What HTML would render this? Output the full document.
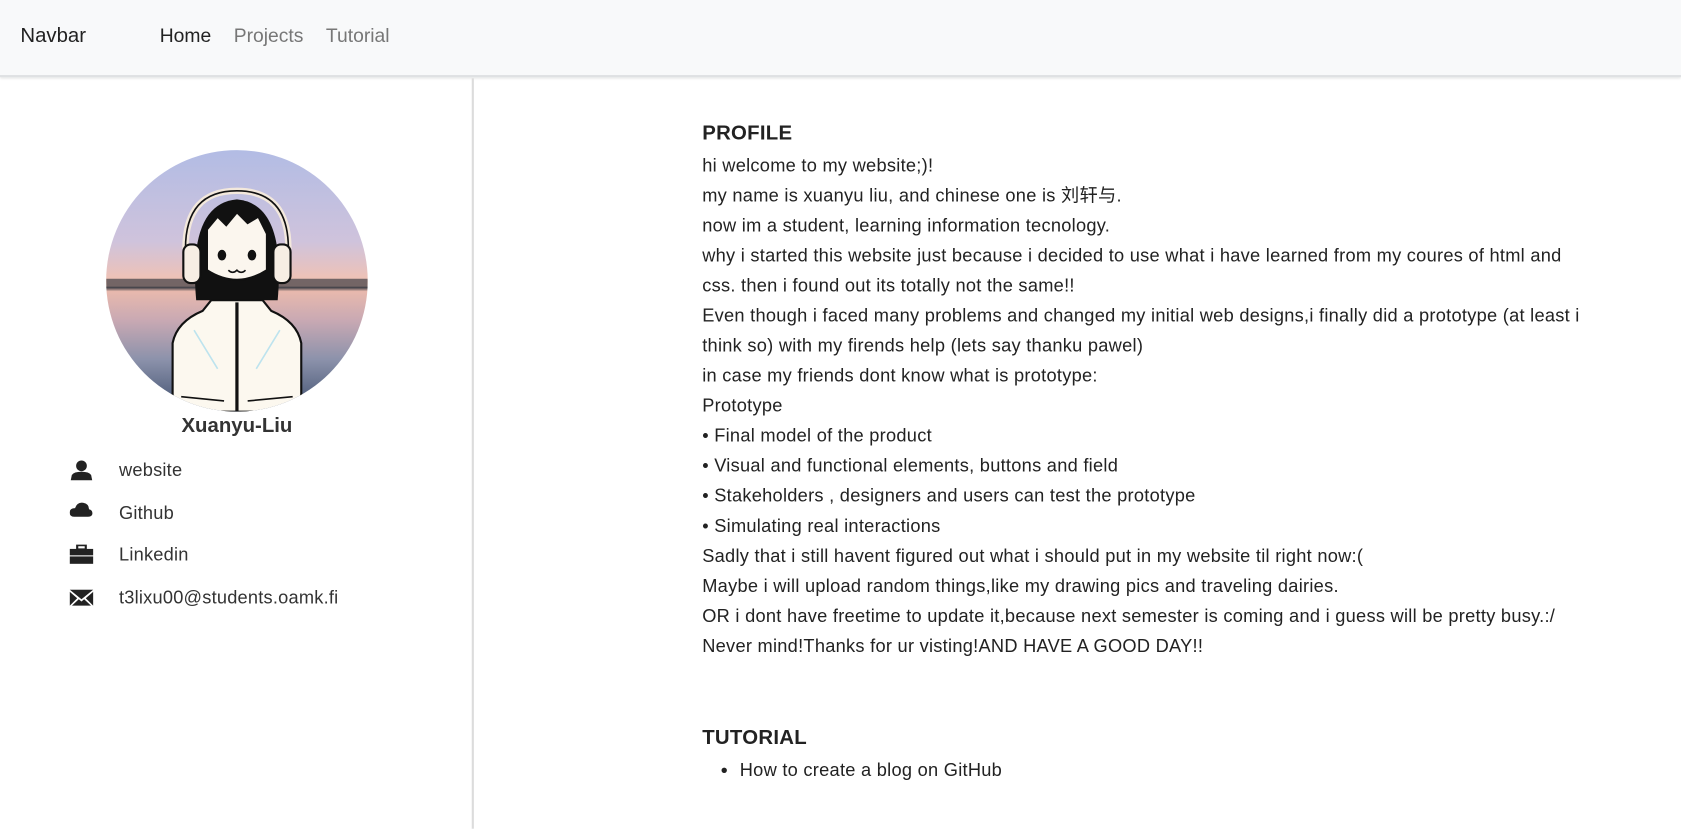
<!DOCTYPE html>
<html><head><meta charset="utf-8"><style>
*{margin:0;padding:0;box-sizing:border-box}
html,body{width:1681px;height:818px;overflow:hidden;background:#fff}
body{font-family:"Liberation Sans","Noto Sans CJK SC",sans-serif;color:#212529}
.w{position:absolute;left:0;top:0;width:1568px;height:763px;transform:scale(1.0721);transform-origin:0 0}
.nav{position:absolute;left:0;top:0;width:1568px;height:72px;background:#f8f9fa;border-bottom:2px solid #dfe1e3;box-shadow:0 1px 2px rgba(0,0,0,.1)}
.nav span{position:absolute;top:23px;font-size:18px}
.side{position:absolute;left:0;top:73px;width:442px;height:700px;border-right:2px solid #dcdcdc}
.av{position:absolute;left:99px;top:140px;width:244px;height:244px;border-radius:50%;overflow:hidden;background:linear-gradient(#b2bce4 0%,#cfc3dc 35%,#f0c2b4 50%,#f3c4b2 52%,#3a3c44 52.5%,#e8b9ad 54%,#c9a9b3 65%,#8c92ab 80%,#3e4f6e 100%)}
.name{position:absolute;left:0;width:442px;top:387px;text-align:center;font-weight:bold;font-size:19px;color:#333}
.it{position:absolute;left:111px;font-size:17px;color:#333;letter-spacing:.2px}
.ic{position:absolute;left:65px}
.main{position:absolute;left:655px;top:113px;font-size:17px;line-height:28px;color:#222;width:830px;letter-spacing:.25px}
h3{font-size:19px;line-height:24px;font-weight:bold;color:#222;margin-bottom:4px}
</style></head><body><div class="w">
<div class="nav"><span style="left:19px;color:#222;font-size:19px">Navbar</span><span style="left:149px;color:#222">Home</span><span style="left:218px;color:#777">Projects</span><span style="left:304px;color:#777">Tutorial</span></div>
<div class="side"></div>
<div class="av">
<svg width="244" height="244" viewBox="0 0 244 244">
<rect x="0" y="120" width="244" height="8" fill="#3d3d45" opacity=".7"/>
<path d="M84 140 Q76 50 122 46 Q168 50 160 140 Z" fill="#111"/>
<path d="M74 92 Q74 38 122 38 Q170 38 170 92" fill="none" stroke="#f3e8dc" stroke-width="6"/>
<path d="M74 92 Q74 38 122 38 Q170 38 170 92" fill="none" stroke="#111" stroke-width="1.5"/>
<rect x="72" y="88" width="16" height="36" rx="7" fill="#f7eee4" stroke="#111" stroke-width="2"/>
<rect x="156" y="88" width="16" height="36" rx="7" fill="#f7eee4" stroke="#111" stroke-width="2"/>
<path d="M94 74 L104 62 L112 70 L122 58 L132 68 L142 62 L150 78 L150 112 Q122 130 94 112 Z" fill="#fbf6ee" stroke="#111" stroke-width="2"/>
<ellipse cx="108" cy="98" rx="4" ry="5" fill="#111"/><ellipse cx="136" cy="98" rx="4" ry="5" fill="#111"/>
<path d="M114 112 Q118 116 122 112 Q126 116 130 112" stroke="#111" fill="none" stroke-width="1.5"/>
<path d="M62 244 L62 180 Q66 160 90 150 L98 140 L146 140 L154 150 Q178 160 182 180 L182 244 Z" fill="#fcf8ef" stroke="#111" stroke-width="2"/>
<path d="M70 230 L110 234 M132 234 L174 230" stroke="#111" stroke-width="1.5"/>
<path d="M82 168 L104 204 M162 168 L140 204" stroke="#bde3ee" stroke-width="1.5"/>
<line x1="122" y1="142" x2="122" y2="244" stroke="#111" stroke-width="3"/>
</svg></div>
<div class="name">Xuanyu-Liu</div>
<svg class="ic" style="top:429px" width="22" height="20" viewBox="0 0 22 20"><circle cx="11" cy="5.5" r="5" fill="#222"/><path d="M1 19 L2 14 Q4 11 11 11 Q18 11 20 14 L21 19Z" fill="#222"/></svg>
<div class="it" style="top:429px">website</div>
<svg class="ic" style="top:468px" width="22" height="16" viewBox="0 0 22 16"><path d="M4 14 Q0 14 0 10 Q0 6 5 6 Q7 0 13 1 Q18 2 18 7 Q22 8 21 12 Q20 14 17 14Z" fill="#222"/></svg>
<div class="it" style="top:469px">Github</div>
<svg class="ic" style="top:508px" width="22" height="18" viewBox="0 0 22 18"><rect x="7" y="0.5" width="8" height="4" fill="none" stroke="#222" stroke-width="2"/><rect x="0" y="4" width="22" height="6" fill="#222"/><rect x="0" y="11" width="22" height="7" fill="#222"/></svg>
<div class="it" style="top:508px">Linkedin</div>
<svg class="ic" style="top:550px" width="22" height="15" viewBox="0 0 22 15"><path d="M0 0H22L11 9Z M0 2L7 8L0 15Z M22 2L15 8L22 15Z M8.5 9L11 11L13.5 9L20 15H2Z" fill="#222"/></svg>
<div class="it" style="top:548px">t3lixu00@students.oamk.fi</div>
<div class="main">
<h3>PROFILE</h3>
hi welcome to my website;)!<br>my name is xuanyu liu, and chinese one is 刘轩与.<br>now im a student, learning information tecnology.<br>why i started this website just because i decided to use what i have learned from my coures of html and css. then i found out its totally not the same!!<br>Even though i faced many problems and changed my initial web designs,i finally did a prototype (at least i think so) with my firends help (lets say thanku pawel)<br>in case my friends dont know what is prototype:<br>Prototype<br>• Final model of the product<br>• Visual and functional elements, buttons and field<br>• Stakeholders , designers and users can test the prototype<br>• Simulating real interactions<br>Sadly that i still havent figured out what i should put in my website til right now:(<br>Maybe i will upload random things,like my drawing pics and traveling dairies.<br>OR i dont have freetime to update it,because next semester is coming and i guess will be pretty busy.:/<br>Never mind!Thanks for ur visting!AND HAVE A GOOD DAY!!
<h3 style="margin-top:60px">TUTORIAL</h3>
<ul style="margin-left:35px"><li>How to create a blog on GitHub</li></ul>
</div>
</div></body></html>
